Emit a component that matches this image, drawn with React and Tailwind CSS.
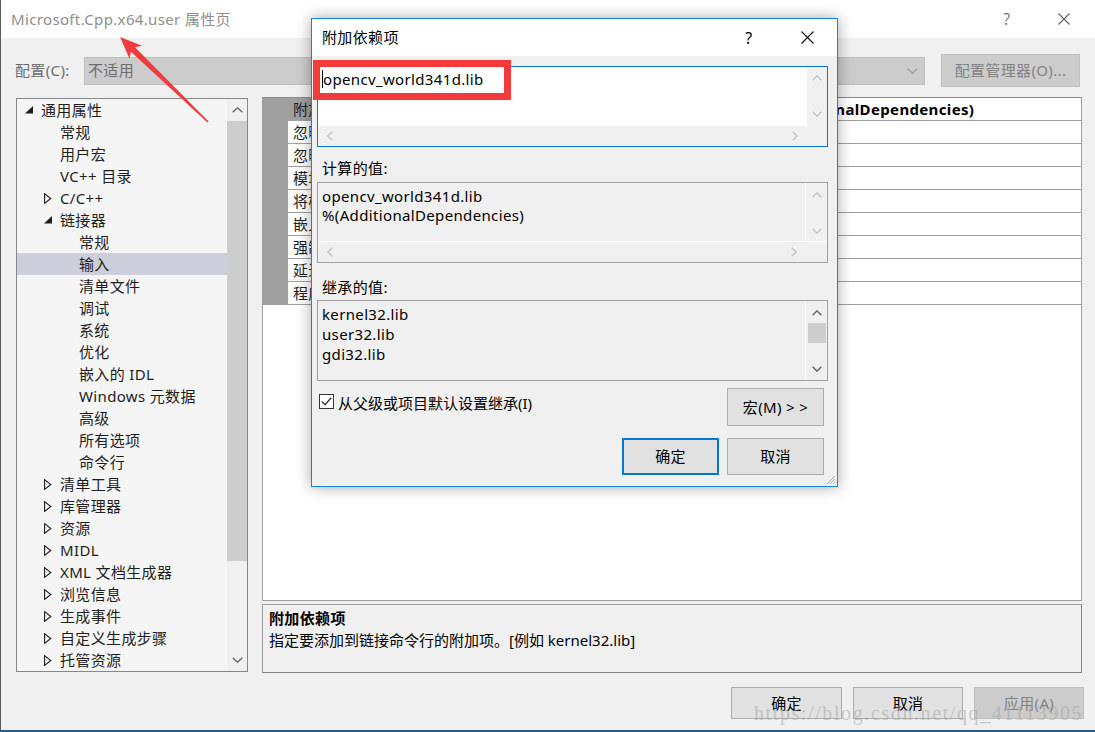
import React from "react";

const tree = [
  { t: "通用属性", l: 0, a: "open" },
  { t: "常规", l: 1 },
  { t: "用户宏", l: 1 },
  { t: "VC++ 目录", l: 1 },
  { t: "C/C++", l: 1, a: "closed" },
  { t: "链接器", l: 1, a: "open" },
  { t: "常规", l: 2 },
  { t: "输入", l: 2, sel: true },
  { t: "清单文件", l: 2 },
  { t: "调试", l: 2 },
  { t: "系统", l: 2 },
  { t: "优化", l: 2 },
  { t: "嵌入的 IDL", l: 2 },
  { t: "Windows 元数据", l: 2 },
  { t: "高级", l: 2 },
  { t: "所有选项", l: 2 },
  { t: "命令行", l: 2 },
  { t: "清单工具", l: 1, a: "closed" },
  { t: "库管理器", l: 1, a: "closed" },
  { t: "资源", l: 1, a: "closed" },
  { t: "MIDL", l: 1, a: "closed" },
  { t: "XML 文档生成器", l: 1, a: "closed" },
  { t: "浏览信息", l: 1, a: "closed" },
  { t: "生成事件", l: 1, a: "closed" },
  { t: "自定义生成步骤", l: 1, a: "closed" },
  { t: "托管资源", l: 1, a: "closed" },
];

const padByLevel = ["pl-[8px]", "pl-[27px]", "pl-[46px]"];

const gridRows = [
  { n: "附加依赖项", v: "opencv_world341d.lib;%(AdditionalDependencies)", sel: true },
  { n: "忽略所有默认库", v: "" },
  { n: "忽略特定默认库", v: "" },
  { n: "模块定义文件", v: "" },
  { n: "将模块添加到程序集", v: "" },
  { n: "嵌入托管资源文件", v: "" },
  { n: "强制符号引用", v: "" },
  { n: "延迟加载的 DLL", v: "" },
  { n: "程序集链接资源", v: "" },
];

function Up({ c = "#c2c2c2", w = 10, h = 6 }) {
  return (
    <svg width={w} height={h} viewBox={`0 0 ${w} ${h}`}>
      <path d={`M0.7 ${h - 0.7} L${w / 2} 0.8 L${w - 0.7} ${h - 0.7}`} fill="none" stroke={c} strokeWidth="1.3" />
    </svg>
  );
}
function Down({ c = "#c2c2c2", w = 10, h = 6 }) {
  return (
    <svg width={w} height={h} viewBox={`0 0 ${w} ${h}`}>
      <path d={`M0.7 0.7 L${w / 2} ${h - 0.8} L${w - 0.7} 0.7`} fill="none" stroke={c} strokeWidth="1.3" />
    </svg>
  );
}
function Left({ c = "#c2c2c2" }) {
  return (
    <svg width="6" height="10" viewBox="0 0 6 10">
      <path d="M5.3 0.7 L0.8 5 L5.3 9.3" fill="none" stroke={c} strokeWidth="1.3" />
    </svg>
  );
}
function Right({ c = "#c2c2c2" }) {
  return (
    <svg width="6" height="10" viewBox="0 0 6 10">
      <path d="M0.7 0.7 L5.2 5 L0.7 9.3" fill="none" stroke={c} strokeWidth="1.3" />
    </svg>
  );
}
function XIcon({ c, s }) {
  return (
    <svg width={s} height={s} viewBox={`0 0 ${s} ${s}`}>
      <path d={`M0.5 0.5 L${s - 0.5} ${s - 0.5} M${s - 0.5} 0.5 L0.5 ${s - 0.5}`} stroke={c} strokeWidth="1.1" />
    </svg>
  );
}

function TreeArrow({ a }) {
  if (a === "open")
    return (
      <svg width="8" height="8" viewBox="0 0 8 8">
        <polygon points="8,0 8,7.5 0,7.5" fill="#1e1e1e" />
      </svg>
    );
  if (a === "closed")
    return (
      <svg width="8" height="11" viewBox="0 0 8 11">
        <polygon points="0.6,0.6 6.8,5.5 0.6,10.4" fill="none" stroke="#1e1e1e" strokeWidth="1.1" />
      </svg>
    );
  return null;
}

export default function App() {
  return (
    <div className="relative w-[1095px] h-[732px] overflow-hidden bg-[#f0f0f0] border-l border-[#5a5a5a] border-b-2 border-b-[#2c5d87] font-['Noto_Sans','Noto_Sans_CJK_SC',sans-serif] text-[15px] tracking-[0.35px] text-[#1e1e1e]">
      {/* Title bar */}
      <div className="h-[38px] bg-white flex items-center pl-[10px] pr-[8px]">
        <span className="text-[#8f8f8f] text-[15px]">Microsoft.Cpp.x64.user 属性页</span>
        <div className="ml-auto flex items-center gap-[19px]">
          <span className="w-[30px] text-center text-[#808080] text-[16px]">?</span>
          <span className="w-[46px] flex justify-center">
            <XIcon c="#606060" s={12} />
          </span>
        </div>
      </div>

      {/* Config row */}
      <div className="flex items-center pt-[16px] pl-[14px] pr-[15px]">
        <span className="w-[69px] text-[#6d6d6d]">配置(C):</span>
        <div className="w-[841px] h-[28px] bg-[#cccccc] border border-[#bfbfbf] flex items-center pl-[3px] pr-[6px] text-[#6d6d6d]">
          <span>不适用</span>
          <span className="ml-auto">
            <Down c="#a0a0a0" w={11} h={6} />
          </span>
        </div>
        <div className="ml-[16px] w-[139px] h-[33px] bg-[#cccccc] border border-[#bfbfbf] flex items-center justify-center text-[#838383]">
          配置管理器(O)...
        </div>
      </div>

      {/* Content */}
      <div className="flex mt-[10px] pl-[15px]">
        {/* Tree */}
        <div className="mt-[1px] w-[232px] h-[574px] border border-[#828790] bg-[#f5f5f5] flex">
          <div className="flex-1 overflow-hidden">
            {tree.map((it, i) => (
              <div
                key={i}
                className={`flex items-center h-[22px] whitespace-nowrap ${padByLevel[it.l]} ${it.sel ? "bg-[#cccedb]" : ""}`}
              >
                <span className="w-[16px] flex items-center">
                  <TreeArrow a={it.a} />
                </span>
                <span className="leading-[22px]">{it.t}</span>
              </div>
            ))}
          </div>
          <div className="w-[20px] bg-[#f0f0f0] flex flex-col items-center">
            <div className="h-[22px] flex items-center justify-center">
              <Up c="#606060" w={11} h={6} />
            </div>
            <div className="w-full h-[440px] bg-[#cdcdcd]" />
            <div className="flex-1 flex items-end pb-[8px]">
              <Down c="#606060" w={11} h={6} />
            </div>
          </div>
        </div>

        {/* Right column */}
        <div className="ml-[14px] w-[820px] flex flex-col">
          <div className="h-[504px] border border-[#a0a0a0] border-t-[#8a8a8a] bg-white">
            {gridRows.map((r, i) => (
              <div key={i} className="flex h-[23px] border-b border-[#a0a0a0]">
                <div className="w-[25px] bg-[#a0a0a0]" />
                <div
                  className={`w-[294px] pl-[5px] border-r border-[#a0a0a0] leading-[22px] whitespace-nowrap overflow-hidden ${r.sel ? "bg-[#a0a0a0] text-[#1e1e1e]" : ""}`}
                >
                  {r.n}
                </div>
                <div className="flex-1 pl-[5px] leading-[22px] font-bold text-black whitespace-nowrap">{r.v}</div>
              </div>
            ))}
          </div>
          <div className="mt-[3px] h-[69px] border border-[#a0a0a0] border-b-[#828282] border-r-[#828282] px-[6px] pt-[2px]">
            <div className="leading-[22px] font-bold text-black">附加依赖项</div>
            <div className="leading-[22px] text-black tracking-normal">指定要添加到链接命令行的附加项。[例如 kernel32.lib]</div>
          </div>
        </div>
      </div>

      {/* Bottom buttons */}
      <div className="flex justify-end mt-[14px] pr-[11px] gap-[11px]">
        <div className="w-[111px] h-[32px] bg-[#e1e1e1] border border-[#adadad] flex items-center justify-center text-black">确定</div>
        <div className="w-[110px] h-[32px] bg-[#e1e1e1] border border-[#adadad] flex items-center justify-center text-black">取消</div>
        <div className="w-[110px] h-[32px] bg-[#cccccc] border border-[#bfbfbf] flex items-center justify-center text-[#838383]">应用(A)</div>
      </div>

      {/* Dialog */}
      <div className="absolute left-[310px] top-[18px] w-[527px] h-[469px] border border-[#1883d7] bg-[#f0f0f0] shadow-[0_0_14px_rgba(0,0,0,0.35)] flex flex-col text-black">
        <div className="h-[37px] bg-white flex items-center pl-[10px] pr-[7px]">
          <span>附加依赖项</span>
          <div className="ml-auto flex items-center gap-[20px]">
            <span className="w-[30px] text-center text-[16px]">?</span>
            <span className="w-[46px] flex justify-center">
              <XIcon c="#111" s={13} />
            </span>
          </div>
        </div>
        <div className="flex-1 pl-[5px] pr-[9px] pt-[10px] flex flex-col">
          {/* Box 1 */}
          <div className="h-[81px] border border-[#0078d7] bg-white flex flex-col">
            <div className="flex flex-1">
              <div className="flex-1 pl-[4px] pt-[2px] leading-[20px] flex items-start">
                <span className="w-[1px] h-[18px] mt-[1px] bg-black" />
                <span>opencv_world341d.lib</span>
              </div>
              <div className="w-[20px] bg-[#f0f0f0] flex flex-col items-center justify-between pt-[8px] pb-[9px]">
                <Up />
                <Down />
              </div>
            </div>
            <div className="h-[20px] flex bg-[#f0f0f0]">
              <div className="flex-1 flex items-center justify-between pl-[9px] pr-[9px]">
                <Left />
                <Right />
              </div>
              <div className="w-[20px]" />
            </div>
          </div>

          <div className="mt-[11px] mb-[4px] leading-[20px] pl-[5px]">计算的值:</div>
          {/* Box 2 */}
          <div className="h-[81px] border border-[#a0a0a0] bg-[#f0f0f0] flex flex-col">
            <div className="flex flex-1 border-b border-white">
              <div className="flex-1 pl-[4px] pt-[4px] leading-[19px] border-r border-white">
                <div>opencv_world341d.lib</div>
                <div>%(AdditionalDependencies)</div>
              </div>
              <div className="w-[21px] flex flex-col items-center justify-between pt-[9px] pb-[7px]">
                <Up />
                <Down />
              </div>
            </div>
            <div className="h-[20px] flex">
              <div className="flex-1 flex items-center justify-between pl-[9px] pr-[9px]">
                <Left />
                <Right />
              </div>
              <div className="w-[21px]" />
            </div>
          </div>

          <div className="mt-[14px] mb-[3px] leading-[20px] pl-[5px]">继承的值:</div>
          {/* Box 3 */}
          <div className="h-[81px] border border-[#a0a0a0] bg-[#f0f0f0] flex">
            <div className="flex-1 pl-[4px] pt-[3px] leading-[20px] border-r border-white">
              <div>kernel32.lib</div>
              <div>user32.lib</div>
              <div>gdi32.lib</div>
            </div>
            <div className="w-[21px] flex flex-col items-center">
              <div className="h-[22px] flex items-center justify-center pt-[2px]">
                <Up c="#606060" />
              </div>
              <div className="w-[18px] h-[20px] bg-[#cdcdcd]" />
              <div className="flex-1 flex items-end pb-[8px]">
                <Down c="#606060" />
              </div>
            </div>
          </div>

          {/* Checkbox row */}
          <div className="flex items-start mt-[7px] pr-[4px]">
            <div className="mt-[6px] ml-[2px] w-[15px] h-[15px] border border-[#333333] bg-white flex items-center justify-center">
              <svg width="11" height="9" viewBox="0 0 11 9">
                <path d="M0.8 4.5 L4 7.8 L10.2 0.8" fill="none" stroke="#333" strokeWidth="1.3" />
              </svg>
            </div>
            <span className="ml-[4px] mt-[5px] leading-[20px] tracking-normal">从父级或项目默认设置继承(I)</span>
            <div className="ml-auto w-[97px] h-[38px] bg-[#e1e1e1] border border-[#adadad] flex items-center justify-center">
              宏(M) &gt; &gt;
            </div>
          </div>

          {/* OK row */}
          <div className="flex justify-end gap-[8px] mt-[12px] pr-[4px]">
            <div className="w-[97px] h-[37px] bg-[#e1e1e1] border-2 border-[#0078d7] flex items-center justify-center">确定</div>
            <div className="w-[97px] h-[37px] bg-[#e1e1e1] border border-[#adadad] flex items-center justify-center">取消</div>
          </div>
        </div>
        <svg className="absolute right-[1px] bottom-[1px]" width="11" height="11" viewBox="0 0 11 11">
          <path d="M10 2 L2 10 M10 5 L5 10 M10 8 L8 10" stroke="#b0b0b0" strokeWidth="1" />
        </svg>
      </div>

      {/* Red highlight box */}
      <div className="absolute left-[312px] top-[60px] w-[198px] h-[40px] border-[7px] border-[#f43a3a]" />

      {/* Red arrow */}
      <svg className="absolute left-0 top-0 pointer-events-none" width="230" height="140" viewBox="0 0 230 140">
        <polygon
          points="119,37 141.1,45.8 134.1,47.3 207.6,121.4 206.4,122.6 129.9,51.7 128.6,58.8"
          fill="#f03c3c"
        />
      </svg>

      {/* Watermark */}
      <div className="absolute left-[753px] top-[698px] font-['Liberation_Serif',serif] text-[20px] tracking-[1.6px] text-[rgba(165,165,165,0.55)] whitespace-nowrap pointer-events-none">
        https://blog.csdn.net/qq_41113905
      </div>
    </div>
  );
}
